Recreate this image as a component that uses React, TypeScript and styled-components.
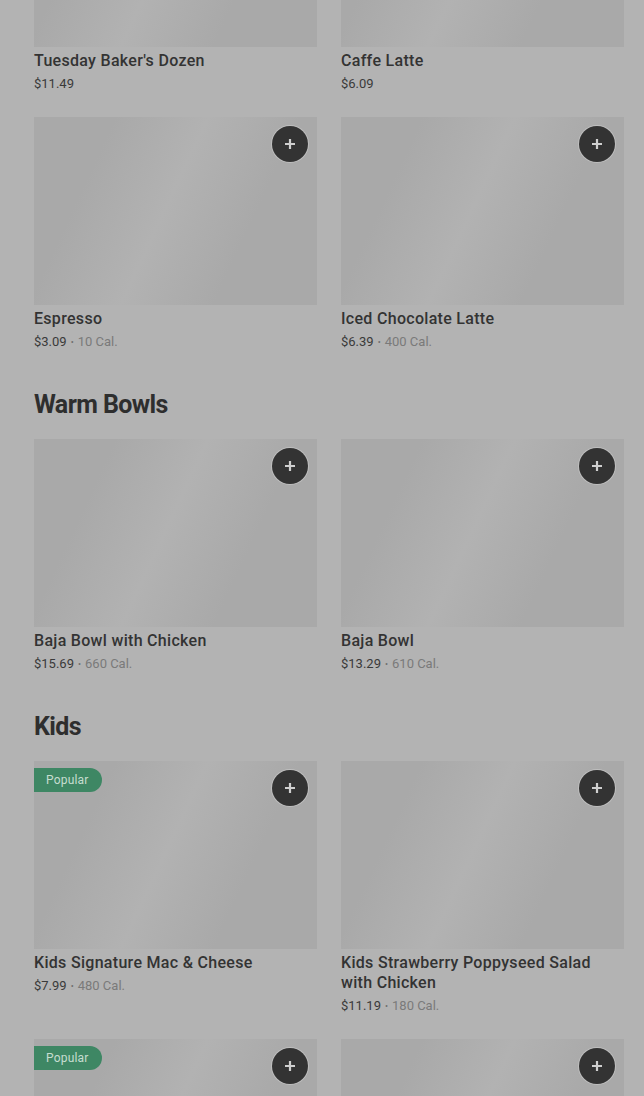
import styled, { createGlobalStyle } from "styled-components";

type Item = {
    name: string;
    price: string;
    cal?: string;
    popular?: boolean;
    add?: boolean;
};

type Section = {
    title?: string;
    items: Item[];
};

const sections: Section[] = [
    {
        items: [
            { name: "Tuesday Baker's Dozen", price: "$11.49", add: true },
            { name: "Caffe Latte", price: "$6.09", add: true },
            { name: "Espresso", price: "$3.09", cal: "10 Cal.", add: true },
            { name: "Iced Chocolate Latte", price: "$6.39", cal: "400 Cal.", add: true },
        ],
    },
    {
        title: "Warm Bowls",
        items: [
            { name: "Baja Bowl with Chicken", price: "$15.69", cal: "660 Cal.", add: true },
            { name: "Baja Bowl", price: "$13.29", cal: "610 Cal.", add: true },
        ],
    },
    {
        title: "Kids",
        items: [
            { name: "Kids Signature Mac & Cheese", price: "$7.99", cal: "480 Cal.", popular: true, add: true },
            { name: "Kids Strawberry Poppyseed Salad with Chicken", price: "$11.19", cal: "180 Cal.", add: true },
            { name: "Kids Grilled Cheese", price: "$6.49", cal: "520 Cal.", popular: true, add: true },
            { name: "Kids Turkey Sandwich", price: "$6.99", cal: "340 Cal.", add: true },
        ],
    },
];

export default function App() {
    return (
        <>
            <GlobalStyle />
            <Page>
                {sections.map((section, i) => (
                    <MenuSection key={i}>
                        {section.title && <Heading>{section.title}</Heading>}
                        <Grid>
                            {section.items.map((item) => (
                                <Card key={item.name}>
                                    <Thumb>
                                        {item.popular && <Badge>Popular</Badge>}
                                        {item.add && (
                                            <AddButton aria-label="Add">
                                                <svg width="12" height="12" viewBox="0 0 12 12">
                                                    <path d="M6 1v10M1 6h10" stroke="currentColor" strokeWidth="2.2" />
                                                </svg>
                                            </AddButton>
                                        )}
                                    </Thumb>
                                    <Name>{item.name}</Name>
                                    <Meta>
                                        <Price>{item.price}</Price>
                                        {item.cal && (
                                            <>
                                                <Dot>•</Dot>
                                                <Cal>{item.cal}</Cal>
                                            </>
                                        )}
                                    </Meta>
                                </Card>
                            ))}
                        </Grid>
                    </MenuSection>
                ))}
            </Page>
        </>
    );
}

const GlobalStyle = createGlobalStyle`
body {
    margin: 0;
    background: #b3b3b3;
    font-family: Roboto, "Liberation Sans", sans-serif;
    overflow: hidden;
}
`;

// page is scrolled: the first row of images starts above the viewport
const Page = styled.main`
    display: flex;
    flex-direction: column;
    gap: 37px;
    margin-top: -141px;
    padding: 0 20px 0 34px;
`;

const MenuSection = styled.section`
    display: flex;
    flex-direction: column;
`;

const Heading = styled.h2`
    margin: 0 0 18px;
    font-size: 25px;
    line-height: 32px;
    font-weight: 700;
    letter-spacing: -0.6px;
    color: #2e2e2e;
`;

const Grid = styled.div`
    display: grid;
    grid-template-columns: 283px 283px;
    column-gap: 24px;
    row-gap: 23px;
    align-items: start;
`;

const Card = styled.div`
    display: flex;
    flex-direction: column;
`;

const Thumb = styled.div`
    position: relative;
    height: 188px;
    background: linear-gradient(115deg, #a9a9a9 22%, #b2b2b2 47%, #a9a9a9 72%);
`;

const Badge = styled.span`
    position: absolute;
    top: 7px;
    left: 0;
    height: 24px;
    padding: 0 13px 0 12px;
    display: flex;
    align-items: center;
    background: #3e8764;
    color: #c6ddd0;
    font-size: 12px;
    letter-spacing: 0.2px;
    border-radius: 0 12px 12px 0;
`;

const AddButton = styled.button`
    position: absolute;
    top: 9px;
    right: 9px;
    width: 36px;
    height: 36px;
    border: none;
    padding: 0;
    border-radius: 50%;
    background: #333333;
    color: #cfcfcf;
    display: flex;
    align-items: center;
    justify-content: center;
    box-shadow: 0 0 0 1px rgba(205, 205, 205, 0.6);
`;

const Name = styled.div`
    margin-top: 4px;
    font-size: 16px;
    line-height: 20px;
    font-weight: 500;
    letter-spacing: 0.3px;
    color: #333333;
`;

const Meta = styled.div`
    margin-top: 3px;
    display: flex;
    align-items: center;
    font-size: 13px;
    line-height: 20px;
`;

const Price = styled.span`
    color: #3a3a3a;
`;

const Dot = styled.span`
    margin: 0 4px;
    font-size: 9px;
    color: #6e6e6e;
`;

const Cal = styled.span`
    color: #7a7a7a;
`;
